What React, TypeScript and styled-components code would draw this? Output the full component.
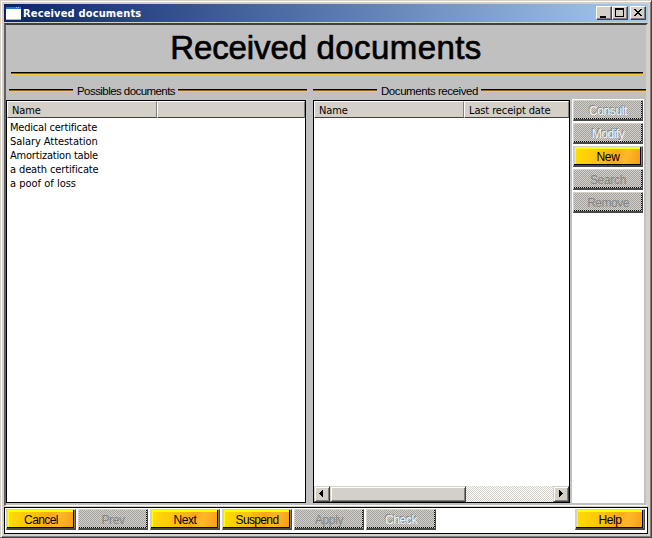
import React from "react";
import styled, { createGlobalStyle, css } from "styled-components";

const Global = createGlobalStyle`
  * { box-sizing: border-box; }
  body { margin: 0; overflow: hidden; font: 11px "DejaVu Sans Condensed", "DejaVu Sans", sans-serif; color: #000; }
`;
const Window = styled.div`
  width: 652px; height: 538px; background: #d4d0c8; padding: 3px;
  border: 1px solid; border-color: #d4d0c8 #404040 #404040 #d4d0c8;
  box-shadow: inset 1px 1px #fff, inset -1px -1px #808080;
  display: flex; flex-direction: column;
`;
const TitleBar = styled.div`
  height: 18px; flex: none; display: flex; align-items: center; padding: 0 2px;
  background: linear-gradient(90deg, #0a246a, #a6caf0);
`;
const TitleText = styled.span`
  color: #fff; font: bold 11px/18px "DejaVu Sans Condensed", "DejaVu Sans", sans-serif;
  margin-left: 2px; padding-top: 1px; letter-spacing: 0.16px; flex: 1; white-space: nowrap;
`;
const raised = css`
  background: #d4d0c8; border: 1px solid; border-color: #fff #404040 #404040 #fff;
  box-shadow: inset -1px -1px #808080;
`;
const rule = css`background: linear-gradient(#000 0 1px, #8c6414 1px 2px, #ffc83c 2px 3px);`;
const Caption = styled.div<{ $gap?: boolean }>`
  ${raised} width: 16px; height: 14px; margin-left: ${p => (p.$gap ? 2 : 0)}px;
  svg { display: block; }
`;
const Content = styled.div`
  flex: 1; min-height: 0; margin: 1px 0; background: #c0c0c0;
  border: solid; border-width: 2px 2px 1px 2px; border-color: #404040 #d4d0c8 #fff #606060;
`;
const Heading = styled.h1`
  margin: 0 4px 0 4px; height: 47px;
  font: 400 33px/46px "Liberation Sans", Arial, sans-serif; text-align: center;
  letter-spacing: 0.42px; -webkit-text-stroke: 0.7px #000; white-space: nowrap;
`;
const HeadingWord = styled.span`letter-spacing: -0.1px;`;
const HeadingRule = styled.div`${rule} height: 3px; margin: 0 3px 0 5px;`;
const Columns = styled.div`
  display: grid; grid-template-columns: 301px 333px; column-gap: 6px; padding-top: 7px;
`;
const Legend = styled.div<{ $inset?: number; $text: number; $ls: number }>`
  height: 18px; display: flex; align-items: flex-start; padding-left: ${p => p.$inset || 0}px;
  span {
    width: ${p => p.$text}px; flex: none; white-space: nowrap; margin: 0 3px 0 4px;
    font: 11.5px/18px "Liberation Sans", Arial, sans-serif; letter-spacing: ${p => p.$ls}px;
  }
  &::before, &::after { content: ""; height: 3px; margin-top: 7px; ${rule} }
  &::before { width: 64px; }
  &::after { flex: 1; }
`;
const Body = styled.div`display: flex; height: 403px; gap: 2px;`;
const List = styled.div<{ $w: number }>`
  width: ${p => p.$w}px; background: #fff; border: 1px solid #000; display: flex; flex-direction: column; flex: none;
`;
const HeaderRow = styled.div`display: flex; height: 17px; flex: none;`;
const HeaderCell = styled.div<{ $w?: number }>`
  ${p => (p.$w ? `width: ${p.$w}px; flex: none;` : "flex: 1;")}
  background: #d4d0c8; border: 1px solid; border-color: #fff #808080 #404040 #fff;
  padding-left: 4px; line-height: 17px; letter-spacing: -0.12px; white-space: nowrap;
`;
const Rows = styled.div`flex: 1; padding: 3px 3px; line-height: 14px;`;
const Item = styled.span<{ $s: number }>`letter-spacing: ${p => p.$s}px; white-space: nowrap; display: block;`;
const Scroll = styled.div`
  height: 16px; flex: none; display: flex;
  background: repeating-conic-gradient(#fff 0 25%, #d4d0c8 0 50%) 0 0 / 2px 2px;
`;
const ScrollButton = styled.div`
  ${raised} width: 16px; border-color: #d4d0c8 #404040 #404040 #d4d0c8;
  box-shadow: inset 1px 1px #fff, inset -1px -1px #808080;
  svg { display: block; }
`;
const Thumb = styled(ScrollButton)`width: 136px; margin-right: auto;`;
const Side = styled.div`
  width: 72px; height: 404px; margin-top: -1px; background: #fff; padding: 1px 1px 0;
  display: flex; flex-direction: column; gap: 2px;
`;
const Button = styled.button<{ $on?: boolean; $light?: boolean; $ls?: number }>`
  width: 70px; height: 21px; flex: none; padding: 2px 0 0; border: solid; border-width: 1px 1px 2px 1px;
  border-color: #d4d0c8 #484848 #484848 #d4d0c8;
  font: 12px/16px "Liberation Sans", Arial, sans-serif; letter-spacing: ${p => p.$ls ?? -0.4}px;
  ${p => p.$on ? css`
    color: #000; background: linear-gradient(105deg, #ffe000, #ffc010 40%, #f8a81a 60%, #ffb82a 75%, #f49a10);
    box-shadow: inset -1px 0 #808080, inset -2px -1px #000, inset 1px 0 #d4d0c8, inset 2px 2px #ffff00;
  ` : css`
    color: ${p.$light ? "#f4f4f4" : "#858585"}; text-shadow: ${p.$light ? "-1px -1px #858585" : "none"};
    background:
      repeating-linear-gradient(90deg, #000 0 1px, #d4d0c8 1px 2px) 0 100% / 100% 1px no-repeat,
      repeating-linear-gradient(#000 0 1px, #d4d0c8 1px 2px) 100% 0 / 1px 100% no-repeat,
      repeating-conic-gradient(#a2a2a2 0 25%, #d4d0c8 0 50%) 0 0 / 2px 2px;
  `}
`;
const Footer = styled.div`
  height: 27px; flex: none; background: #fff; border: 1px solid #000; display: flex; gap: 2px; padding: 1px 2px 0 1px;
  ${Button}:last-child { margin-left: auto; }
`;

const docs: [string, number][] = [
  ["Medical certificate", -0.2], ["Salary Attestation", -0.06], ["Amortization table", -0.2],
  ["a death certificate", -0.12], ["a poof of loss", 0],
];

const Arrow = ({ right }: { right?: boolean }) => (
  <svg width="14" height="14" viewBox="0 0 14 14" shapeRendering="crispEdges">
    <path d={right ? "M5 3v7l4-3.5z" : "M8 3v7l-4-3.5z"} />
  </svg>
);

export default function App() {
  return (
    <Window>
      <Global />
      <TitleBar>
        <svg width="15" height="13" shapeRendering="crispEdges">
          <path fill="#2474d8" d="M0 0h15v3H0z" /><path fill="#fff" d="M0 2h15v10H0z" /><path fill="#8bbdf0" d="M10 0h1v1h-1zM12 0h1v1h-1zM0 12h15v1H0z" />
        </svg>
        <TitleText>Received documents</TitleText>
        <Caption><svg width="14" height="12"><path d="M3 9h6v2H3z" /></svg></Caption>
        <Caption><svg width="14" height="12" shapeRendering="crispEdges"><path fillRule="evenodd" d="M2 1h9v9H2zM3 3v6h7V3z" /></svg></Caption>
        <Caption $gap><svg width="14" height="12" shapeRendering="crispEdges"><path d="M3 2h2v1h1v1h2V3h1V2h2v1h-1v1H9v1H8v1h1v1h1v1h1v1H9V8H8V7H6v1H5v1H3V8h1V7h1V6h1V5H5V4H4V3H3z" /></svg></Caption>
      </TitleBar>
      <Content>
        <Heading><HeadingWord>Received</HeadingWord> documents</Heading>
        <HeadingRule />
        <Columns>
          <div>
            <Legend $inset={3} $text={98} $ls={-0.56}><span>Possibles documents</span></Legend>
            <Body>
              <List $w={300}>
                <HeaderRow><HeaderCell $w={150}>Name</HeaderCell><HeaderCell /></HeaderRow>
                <Rows>{docs.map(([name, s]) => <Item key={name} $s={s}>{name}</Item>)}</Rows>
              </List>
            </Body>
          </div>
          <div>
            <Legend $text={97} $ls={-0.44}><span>Documents received</span></Legend>
            <Body>
              <List $w={257}>
                <HeaderRow><HeaderCell $w={150}>Name</HeaderCell><HeaderCell>Last receipt date</HeaderCell></HeaderRow>
                <Rows />
                <Scroll><ScrollButton><Arrow /></ScrollButton><Thumb /><ScrollButton><Arrow right /></ScrollButton></Scroll>
              </List>
              <Side>
                <Button $light>Consult</Button><Button $light $ls={-0.5}>Modify</Button><Button $on>New</Button><Button $ls={-0.3}>Search</Button><Button $ls={-0.5}>Remove</Button>
              </Side>
            </Body>
          </div>
        </Columns>
      </Content>
      <Footer>
        <Button $on $ls={-0.6}>Cancel</Button><Button>Prev</Button><Button $on>Next</Button><Button $on $ls={-0.65}>Suspend</Button><Button>Apply</Button><Button $light>Check</Button><Button $on>Help</Button>
      </Footer>
    </Window>
  );
}
